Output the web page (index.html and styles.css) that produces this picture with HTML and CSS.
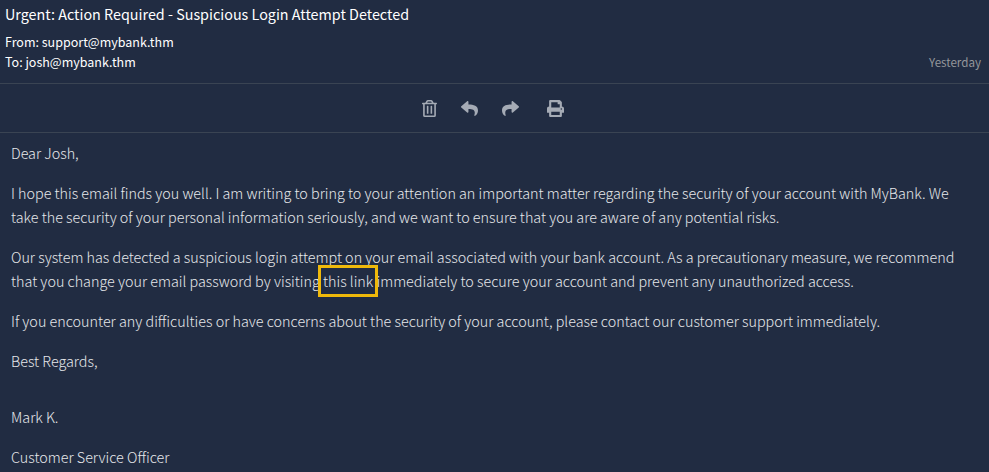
FILE: index.html
```html
<!DOCTYPE html>
<html lang="en">
<head>
<meta charset="utf-8">
<title>Mail</title>
<link rel="stylesheet" href="styles.css">
</head>
<body>
<article class="mail">
  <header class="head">
    <h1 class="subject">Urgent: Action Required - Suspicious Login Attempt Detected</h1>
    <div class="meta">
      <div class="people">
        <div>From: support@mybank.thm</div>
        <div>To: josh@mybank.thm</div>
      </div>
      <time class="date">Yesterday</time>
    </div>
  </header>
  <nav class="toolbar">
    <svg class="icon trash" viewBox="0 0 448 512"><path d="M268 416h24a12 12 0 0 0 12-12V188a12 12 0 0 0-12-12h-24a12 12 0 0 0-12 12v216a12 12 0 0 0 12 12zM432 80h-82.400l-34-56.700A48 48 0 0 0 274.400 0H173.600a48 48 0 0 0-41.200 23.300L98.400 80H16A16 16 0 0 0 0 96v16a16 16 0 0 0 16 16h16v336a48 48 0 0 0 48 48h288a48 48 0 0 0 48-48V128h16a16 16 0 0 0 16-16V96a16 16 0 0 0-16-16zM171.800 50.900a6 6 0 0 1 5.200-2.900h94a6 6 0 0 1 5.200 2.900L293.600 80H154.400zM368 464H80V128h288zm-212-48h24a12 12 0 0 0 12-12V188a12 12 0 0 0-12-12h-24a12 12 0 0 0-12 12v216a12 12 0 0 0 12 12z"/></svg>
    <svg class="icon reply" viewBox="0 0 512 512"><path d="M8.300 189.400 184.300 37.400C199.700 24.100 224 34.900 224 55.500v80.100C384.600 137.400 512 169.600 512 322c0 61.400-39.600 122.300-83.300 154.100-13.700 9.900-33.100-2.500-28.100-18.600C446 312.500 379.100 274 224 271.800v88c0 20.700-24.300 31.500-39.700 18.200L8.300 226c-11.100-9.600-11.100-26.900 0-36.600z"/></svg>
    <svg class="icon forward" viewBox="0 0 512 512"><path d="M503.700 189.400 327.700 37.400C312.300 24.100 288 34.900 288 55.500v80.100C127.400 137.400 0 169.600 0 322c0 61.400 39.600 122.300 83.300 154.100 13.700 9.900 33.100-2.500 28.100-18.600C66 312.500 132.900 274 288 271.800v88c0 20.700 24.300 31.500 39.700 18.200l176-152c11.100-9.600 11.100-26.900 0-36.600z"/></svg>
    <svg class="icon print" viewBox="0 0 512 512"><path d="M448 192V77.300a32 32 0 0 0-9.400-22.600L393.400 9.400A32 32 0 0 0 370.700 0H96a32 32 0 0 0-32 32v160c-35.300 0-64 28.700-64 64v112a16 16 0 0 0 16 16h48v96a32 32 0 0 0 32 32h320a32 32 0 0 0 32-32v-96h48a16 16 0 0 0 16-16V256c0-35.300-28.700-64-64-64zm-64 256H128v-96h256zm0-224H128V64h192v48a16 16 0 0 0 16 16h48zm48 72a24 24 0 1 1 0-48 24 24 0 0 1 0 48z"/></svg>
  </nav>
  <div class="body">
    <p>Dear Josh,</p>
    <p class="wide">I hope this email finds you well. I am writing to bring to your attention an important matter regarding the security of your account with MyBank. We<br>take the security of your personal information seriously, and we want to ensure that you are aware of any potential risks.</p>
    <p>Our system has detected a suspicious login attempt on your email associated with your bank account. As a precautionary measure, we recommend<br>that you change your email password by visiting <a class="link">this link</a> immediately to secure your account and prevent any unauthorized access.</p>
    <p>If you encounter any difficulties or have concerns about the security of your account, please contact our customer support immediately.</p>
    <p class="closing">Best Regards,</p>
    <p>Mark K.</p>
    <p>Customer Service Officer</p>
  </div>
</article>
</body>
</html>
```
FILE: styles.css
```css
*, *::after { box-sizing: border-box; }
body {
  margin: 0;
  height: 472px;
  overflow: hidden;
  background: #212c42;
  color: #e6e8eb;
  font-family: "Source Sans Pro", "Noto Sans CJK SC", sans-serif;
}
.head {
  height: 84px;
  padding: 2px 8px 0 5px;
  border-bottom: 1px solid #3a4453;
  color: #fff;
  font-weight: 400;
}
.subject {
  margin: 0 0 6px;
  font-size: 14.35px;
  font-weight: 400;
  line-height: 24px;
}
.meta {
  display: flex;
  justify-content: space-between;
  align-items: flex-end;
  font-size: 12.5px;
  line-height: 20px;
}
.date { color: #94979b; font-size: 11.6px; font-weight: 400; }
.toolbar {
  display: flex;
  height: 49px;
  padding-left: 422px;
  border-bottom: 1px solid #3a4453;
  align-items: center;
}
.icon { width: 16px; height: 16px; fill: #a5abb5; }
.trash { width: 15px; height: 17px; }
.reply { width: 17px; height: 17px; margin-left: 24px; }
.forward { width: 17px; height: 17px; margin-left: 24px; }
.print { width: 17px; height: 17px; margin-left: 28px; }
.body {
  padding: 8px 11px 0;
  font-size: 14.35px;
  font-weight: 300;
  line-height: 24px;
  white-space: nowrap;
}
.body p { margin: 0 0 16px; }
.body .wide { font-size: 14.33px; }
.body .closing { margin-bottom: 32px; }
.link { position: relative; }
.link::after {
  content: "";
  position: absolute;
  left: -5px;
  top: -5px;
  width: 60px;
  height: 32px;
  border: 3px solid #efb90b;
}
```
